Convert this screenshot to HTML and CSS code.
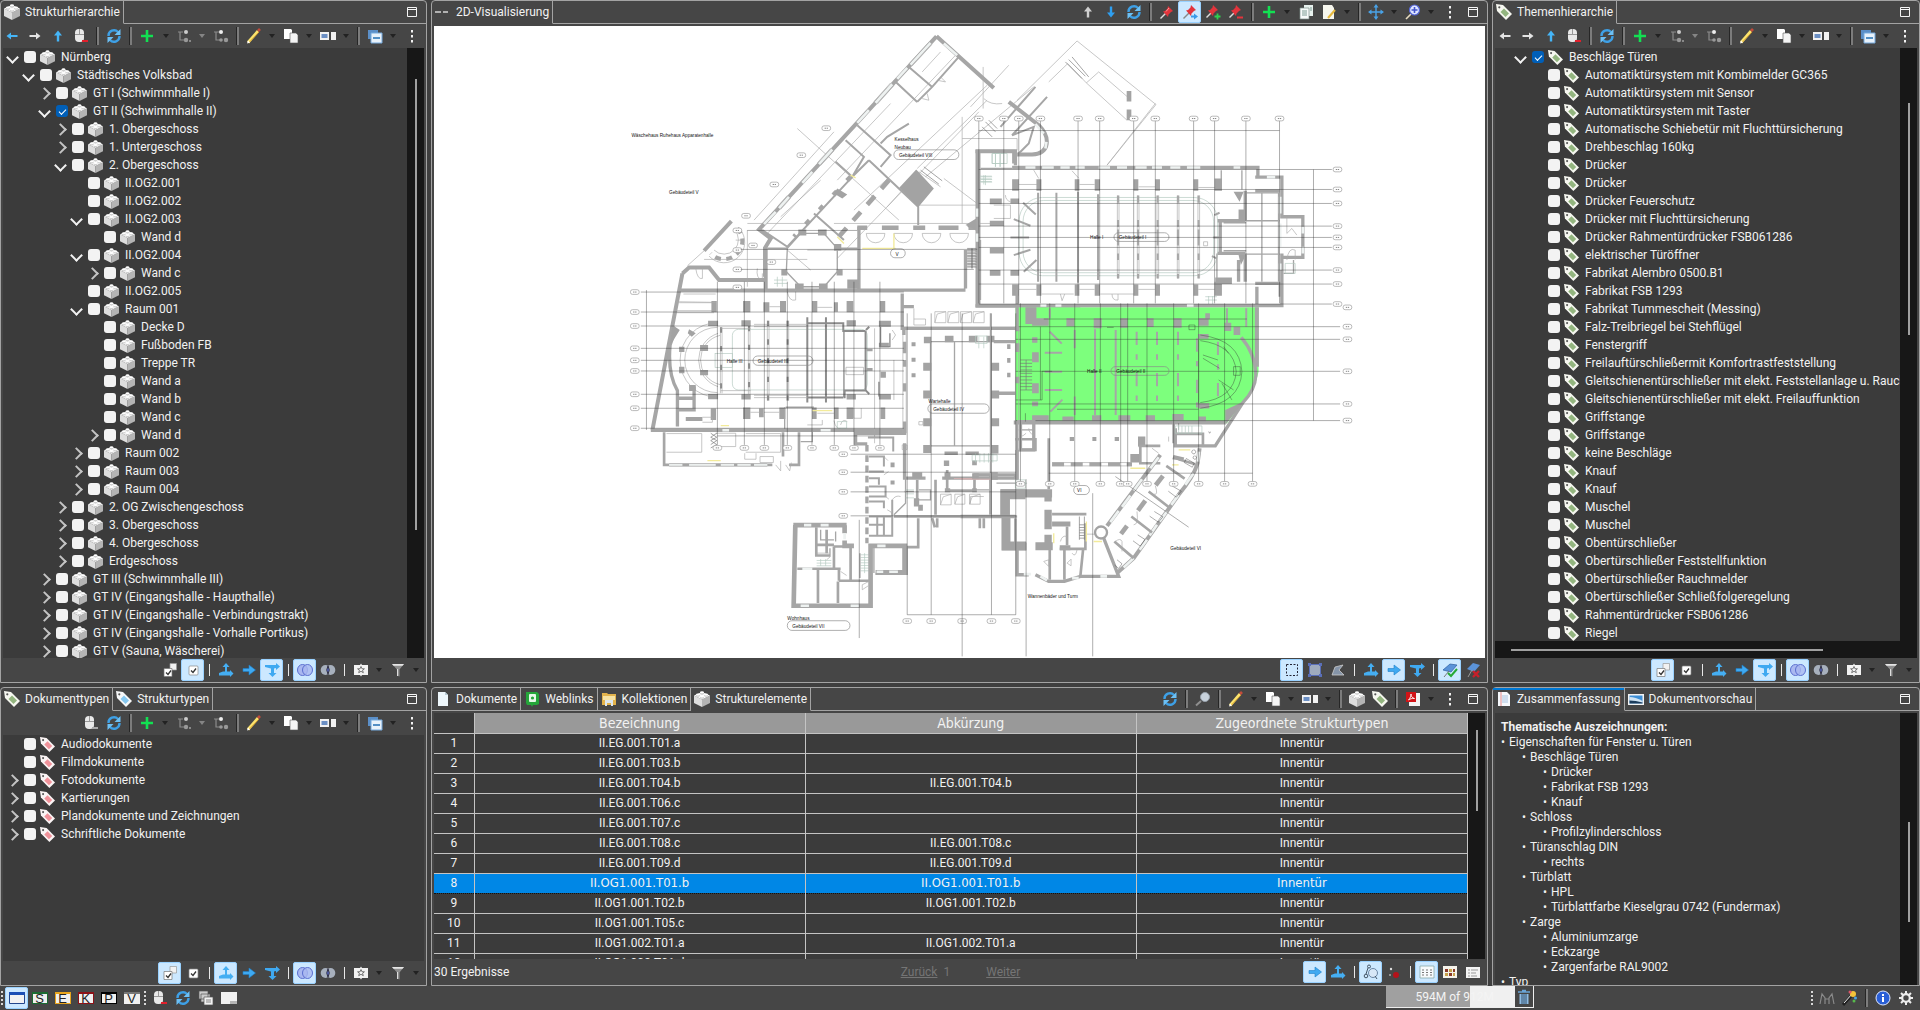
FILE: index.html
```
<!DOCTYPE html>
<html lang="de">
<head>
    <meta charset="UTF-8">
    <meta name="viewport" content="width=device-width, initial-scale=1.0">
    <title>Volksbad Nürnberg</title>
    <link rel="stylesheet" href="styles.css">
</head>
<body>
    <!-- Icon set -->
    <svg class="sprite" aria-hidden="true">
        <symbol id="i-cube" viewBox="0 0 16 16"><path d="M0 4.500l8 4V16l-8-4z" fill="#dedede"/><path d="M16 4.500l-8 4V16l8-4z" fill="#b4b4b4"/><path d="M0 4.500L8 1l8 3.500-8 4z" fill="#fafafa"/><path d="M2 3.500v1.500l2 1 2-1V3.500zM10 3.500v1.500l2 1 2-1V3.500zM6 1v2l2 1 2-1V1zM6 5.500v1.500l2 1 2-1V5.500z" fill="#cfcfcf"/><g fill="#fff"><ellipse cx="4" cy="3.500" rx="2" ry="1"/><ellipse cx="12" cy="3.500" rx="2" ry="1"/><ellipse cx="8" cy="1.200" rx="2" ry="1"/><ellipse cx="8" cy="5.400" rx="2" ry="1"/></g></symbol>
        <symbol id="i-tag-green" viewBox="0 0 16 16"><path d="M0 0l7 1 9 9-6 6-9-9z" fill="#f6f7f0"/><circle cx="3.300" cy="3.300" r="1.100" fill="#555"/><path d="M8 4.500l5 5-3.500 3.500-5-5z" fill="#93b57f"/></symbol>
        <symbol id="i-tag-blue" viewBox="0 0 16 16"><path d="M0 0l7 1 9 9-6 6-9-9z" fill="#f6f7f8"/><circle cx="3.300" cy="3.300" r="1.100" fill="#555"/><path d="M8 4.500l5 5-3.500 3.500-5-5z" fill="#86c8f0"/></symbol>
        <symbol id="i-tag-red" viewBox="0 0 16 16"><path d="M0 0l7 1 9 9-6 6-9-9z" fill="#faf4f4"/><circle cx="3.300" cy="3.300" r="1.100" fill="#555"/><path d="M8 4.500l5 5-3.500 3.500-5-5z" fill="#f0929a"/></symbol>
        <symbol id="i-back" viewBox="0 0 16 16"><path d="M2.500 8L7 4.500V7h6.500v2H7v2.500z" fill="#45b5f7"/></symbol>
        <symbol id="i-back-off" viewBox="0 0 16 16"><path d="M2.500 8L7 4.500V7h6.500v2H7v2.500z" fill="#e4e4e4"/></symbol>
        <symbol id="i-fwd" viewBox="0 0 16 16"><path d="M13.500 8L9 4.500V7H2.500v2H9v2.500z" fill="#e4e4e4"/></symbol>
        <symbol id="i-up" viewBox="0 0 16 16"><path d="M8 2.500L4 7.500h2.800v6h2.400v-6H12z" fill="#45b5f7"/></symbol>
        <symbol id="i-up-off" viewBox="0 0 16 16"><path d="M8 2.500L4 7.500h2.800v6h2.400v-6H12z" fill="#d0d0d0"/></symbol>
        <symbol id="i-down" viewBox="0 0 16 16"><path d="M8 13.500l4-5H9.200v-6H6.800v6H4z" fill="#2f9ff0"/></symbol>
        <symbol id="i-mouse" viewBox="0 0 16 16"><rect x="2" y="1" width="9" height="13" rx="4" fill="#e9e9e9"/><path d="M6.500 1v5M2 6.500h9" stroke="#999" fill="none"/><path d="M9 12h6v2H9z" fill="#e0202c"/></symbol>
        <symbol id="i-mouse-off" viewBox="0 0 16 16"><rect x="2" y="1" width="9" height="13" rx="4" fill="#e9e9e9"/><path d="M6.500 1v5M2 6.500h9" stroke="#999" fill="none"/><path d="M9 12h6v2H9z" fill="#aaa"/></symbol>
        <symbol id="i-refresh" viewBox="0 0 16 16"><path d="M2.500 8A5.500 5.500 0 0 1 12 4M13.500 8A5.500 5.500 0 0 1 4 12" stroke="#3ea0e6" stroke-width="2.400" fill="none"/><path d="M14.500 1v6H8.500zM1.500 15V9h6z" fill="#6cc0f5"/></symbol>
        <symbol id="i-plus" viewBox="0 0 16 16"><path d="M8 2v12M2 8h12" stroke="#12e052" stroke-width="2.600"/></symbol>
        <symbol id="i-node" viewBox="0 0 16 16"><path d="M2 4h5M4 4v8h4" stroke="#8c8c8c" stroke-width="1.200" fill="none"/><circle cx="10" cy="4" r="2" fill="#ccc"/><circle cx="10" cy="12" r="2.200" fill="#999"/><path d="M13 12h2v2h-2z" fill="#888"/></symbol>
        <symbol id="i-child" viewBox="0 0 16 16"><path d="M1 4h5M3 4v8h4" stroke="#8c8c8c" stroke-width="1.200" fill="none"/><circle cx="8" cy="4" r="2" fill="#eee"/><circle cx="8" cy="12" r="1.800" fill="#999"/><circle cx="13" cy="12" r="2.200" fill="#999"/></symbol>
        <symbol id="i-pencil" viewBox="0 0 16 16"><path d="M2 14.500L12 3" stroke="#fbe36d" stroke-width="2.800"/><path d="M3 14.500L13 4" stroke="#d79b22" stroke-width=".8"/><path d="M12 3l2-2" stroke="#c34b3b" stroke-width="2.600"/><path d="M1 15.500l1-3 2 2z" fill="#fff"/></symbol>
        <symbol id="i-copy" viewBox="0 0 16 16"><path d="M1 1h7l1 1v9H1z" fill="#fff"/><path d="M7 5h6l2 2v8H7z" fill="#f4f4f4" stroke="#555" stroke-width=".6"/></symbol>
        <symbol id="i-rename" viewBox="0 0 16 16"><path d="M0 4h9v8H0z" fill="#f2f2f2"/><path d="M1.500 6h6v4h-6z" fill="#6b8fc4"/><path d="M11 4h5v8h-5z" fill="#f2f2f2"/></symbol>
        <symbol id="i-collapse" viewBox="0 0 16 16"><path d="M1 2h10v9H1z" fill="#5b8fc8"/><path d="M4 5h11v10H4z" fill="#e8f2fb" stroke="#74a9dd"/><path d="M6 10h7" stroke="#2d76b8" stroke-width="1.600"/></symbol>
        <symbol id="i-more" viewBox="0 0 16 16"><path d="M7 2h2v2.500H7zM7 7h2v2.500H7zM7 12h2v2.500H7z" fill="#f2f2f2"/></symbol>
        <symbol id="i-max" viewBox="0 0 16 16"><path d="M3.500 3.500h9v9h-9zM3.500 5.500h9" stroke="#f5f5f5" fill="none"/></symbol>
        <symbol id="i-pin" viewBox="0 0 16 16"><path d="M1.500 14.500L7 9" stroke="#ddd" stroke-width="1.400"/><path d="M9 2l5 5-2 1-2.500 2.500L9 13 4 7.500 6 7l2.500-2.500z" fill="#e3343c"/><path d="M10 4L7 7.500" stroke="#ff9a9a"/></symbol>
        <symbol id="i-pin-go" viewBox="0 0 16 16"><path d="M1.500 14.500L7 9" stroke="#888" stroke-width="1.400"/><path d="M9 1l5 5-2 1-2.500 2.500L9 12 4 6.500 6 6l2.500-2.500z" fill="#e3343c"/><path d="M9 11.500h3V9.500l4 3-4 3v-2H9z" fill="#3a9ae8"/></symbol>
        <symbol id="i-pin-add" viewBox="0 0 16 16"><path d="M1.500 13.500L6 9" stroke="#ddd" stroke-width="1.400"/><path d="M8 1l5 5-2 1-2.500 2.500L8 12 3 6.500 5 6l2.500-2.500z" fill="#e3343c"/><path d="M12.500 9.500v6M9.500 12.500h6" stroke="#2fd04e" stroke-width="1.800"/></symbol>
        <symbol id="i-pin-del" viewBox="0 0 16 16"><path d="M1.500 13.500L6 9" stroke="#ddd" stroke-width="1.400"/><path d="M8 1l5 5-2 1-2.500 2.500L8 12 3 6.500 5 6l2.500-2.500z" fill="#e3343c"/><path d="M9 13.500h6" stroke="#e3343c" stroke-width="2"/></symbol>
        <symbol id="i-docs" viewBox="0 0 16 16"><path d="M6 1h9v11H6z" fill="#e8f1ee"/><path d="M2 4h9v11H2z" fill="#f7fbfa" stroke="#7c8f8a" stroke-width=".7"/><path d="M4 7h5M4 9h5M4 11h5M12 4h2M12 6h2" stroke="#7c9c94"/></symbol>
        <symbol id="i-note" viewBox="0 0 16 16"><path d="M2 1h9l2 3v11H2z" fill="#f6f6ee"/><path d="M7 14l7-8" stroke="#e6b93e" stroke-width="2"/></symbol>
        <symbol id="i-move" viewBox="0 0 16 16"><path d="M8 2v12M2 8h12" stroke="#49a3e8" stroke-width="1.400"/><path d="M8 0L5.500 3.500h5zM8 16l-2.500-3.500h5zM0 8l3.500-2.500v5zM16 8l-3.500-2.500v5z" fill="#49a3e8"/></symbol>
        <symbol id="i-zoomfit" viewBox="0 0 16 16"><path d="M1 15l5-5" stroke="#e8dcc0" stroke-width="1.600"/><circle cx="9.500" cy="6" r="5" fill="#dfe6ff" stroke="#5566d8" stroke-width="1.200"/><path d="M9.500 3v6M6.500 6h6" stroke="#4455cc" stroke-width="1.600"/></symbol>
        <symbol id="i-magnify" viewBox="0 0 16 16"><path d="M1 14.500L6 10" stroke="#8f8f8f" stroke-width="2"/><circle cx="10" cy="6" r="4.500" fill="#c8d2dc" stroke="#98a2ac"/></symbol>
        <symbol id="i-pdf" viewBox="0 0 16 16"><path d="M4 2h11v13H4z" fill="#f3f3f3"/><path d="M1 1h10v10H1z" fill="#d21317"/><path d="M3.500 9C5.500 7 6 4.500 6 3c0 2 1 4 3.500 4.500C7 7 5 8 3.500 9z" stroke="#fff" fill="none" stroke-width=".9"/></symbol>
        <symbol id="i-allcheck" viewBox="0 0 16 16"><path d="M8 1.500h6.500v6.500H8z" fill="#f2f2f2" stroke="#999" stroke-width=".7"/><path d="M2 6.500h8v8H2z" fill="#fff" stroke="#777" stroke-width=".7"/><path d="M4 10.500l2 2 3-4" stroke="#333" fill="none" stroke-width="1.300"/></symbol>
        <symbol id="i-check" viewBox="0 0 16 16"><rect x="4" y="4" width="9" height="9" rx="1" fill="#fff" stroke="#888" stroke-width=".7"/><path d="M6 8.500l2 2 3-4" stroke="#333" fill="none" stroke-width="1.300"/></symbol>
        <symbol id="i-inherit" viewBox="0 0 16 16"><path d="M8 1l3.500 4H9v4.500h3V8l3.500 3.500L12 15v-1.500H1V11l4-1.500h2V5H4.500z" fill="#45aef2"/></symbol>
        <symbol id="i-go" viewBox="0 0 16 16"><path d="M2 6.500h6V3l6.500 5L8 13V9.500H2z" fill="#3fa9f1" stroke="#1d7fc9" stroke-width=".6"/></symbol>
        <symbol id="i-tdown" viewBox="0 0 16 16"><path d="M1 3h11V1l4 3.500L12 8V6L10 6.500V11h2.500L8.500 15 4.500 11H7V6.500L1 5z" fill="#3fa9f1"/></symbol>
        <symbol id="i-union" viewBox="0 0 16 16"><ellipse cx="5.500" cy="8" rx="5" ry="5.500" fill="#a9b8f0" stroke="#5b6fd0"/><ellipse cx="10.500" cy="8" rx="5" ry="5.500" fill="#a9b8f0" fill-opacity=".8" stroke="#5b6fd0"/></symbol>
        <symbol id="i-intersect" viewBox="0 0 16 16"><ellipse cx="5.500" cy="8" rx="4.800" ry="5" fill="#a7b0bd"/><ellipse cx="10.500" cy="8" rx="4.800" ry="5" fill="#a7b0bd"/><path d="M8 3.700q2.500 4.300 0 8.600-2.500-4.300 0-8.600z" fill="#5c70d8" stroke="#334"/></symbol>
        <symbol id="i-star" viewBox="0 0 16 16"><path d="M1 3h6l1-1.500L9 3h6v10H9l-1 1.500L7 13H1z" fill="#f3f3f3"/><path d="M8 4.500l1 2.300h2.400L9.600 8.300l.7 2.400L8 9.300l-2.300 1.400.7-2.400-1.800-1.500H7z" fill="none" stroke="#555" stroke-width=".8"/></symbol>
        <symbol id="i-filter" viewBox="0 0 16 16"><path d="M2 2h12L9.500 7.500v7l-2.500-1v-6z" fill="#8e8e8e"/><path d="M2 2h12l-1.500 1.800h-9z" fill="#e6e6e6"/><path d="M7.500 7v7" stroke="#ddd"/></symbol>
        <symbol id="i-select" viewBox="0 0 16 16"><path d="M2.500 2.500h11v11h-11z" fill="none" stroke="#223" stroke-dasharray="2 1.500"/></symbol>
        <symbol id="i-rect" viewBox="0 0 16 16"><path d="M2.500 2.500h11v11h-11z" fill="#9fabbd" stroke="#5a6fb8"/><path d="M1 1h3v3H1zM12 1h3v3h-3zM1 12h3v3H1zM12 12h3v3h-3z" fill="#5a6fb8"/></symbol>
        <symbol id="i-poly" viewBox="0 0 16 16"><path d="M2 13l3-8 8-2-4 5 5 5z" fill="#8594a8" stroke="#ccc" stroke-width=".8"/></symbol>
        <symbol id="i-layer-ok" viewBox="0 0 16 16"><path d="M1 8l7-6 7 1-6 7z" fill="#5b93d8" stroke="#2b5da0" stroke-width=".7"/><path d="M2 15l5-6" stroke="#777"/><path d="M6 11l3 3 6-7" stroke="#27a935" stroke-width="2" fill="none"/></symbol>
        <symbol id="i-layer-del" viewBox="0 0 16 16"><path d="M2 7l6-6 7 2-6 7z" fill="#5b93d8"/><path d="M3 15l4-7" stroke="#999"/><path d="M8 9l6 6M14 9l-6 6" stroke="#c8202a" stroke-width="2.400"/></symbol>
        <symbol id="i-links" viewBox="0 0 16 16"><circle cx="10" cy="9" r="4.500" fill="#d7e7f7" stroke="#6a86a5"/><circle cx="6" cy="2.500" r="1.500" fill="none" stroke="#456"/><circle cx="3" cy="12" r="1.800" fill="none" stroke="#456"/><path d="M5 4L3 10M12 12l2 3" stroke="#456"/></symbol>
        <symbol id="i-unlink" viewBox="0 0 16 16"><circle cx="5" cy="5" r="1.200" fill="#ddd"/><circle cx="4" cy="11" r="1" fill="#aaa"/><circle cx="10" cy="11" r="3" fill="#b3121a"/></symbol>
        <symbol id="i-table" viewBox="0 0 16 16"><path d="M1 2h14v12H1z" fill="#f7fafc" stroke="#8aa" stroke-width=".8"/><path d="M3 6h2M7 6h2M11 6h2M3 8.500h2M7 8.500h2M11 8.500h2M3 11h2M7 11h2M11 11h2" stroke="#777"/></symbol>
        <symbol id="i-thumbs" viewBox="0 0 16 16"><path d="M1 2h14v12H1z" fill="#f5f3ea"/><path d="M3 5h3v3H3zM11 5h2v3h-2zM7 9h3v3H7z" fill="#8b3a2a"/><path d="M7 5h3v3H7zM3 9h3v3H3zM11 9h2v3h-2z" fill="#c8a24a"/></symbol>
        <symbol id="i-list" viewBox="0 0 16 16"><path d="M1 3h14v11H1z" fill="#f4f4f4"/><path d="M3 6h2M6 6h7M3 9h2M6 9h5M3 12h2M6 12h6" stroke="#999"/></symbol>
        <symbol id="i-page" viewBox="0 0 16 16"><path d="M3 1h7l3 3v11H3z" fill="#eef7fc"/><path d="M10 1v3h3z" fill="#b9cdd8"/></symbol>
        <symbol id="i-weblink" viewBox="0 0 16 16"><path d="M2 1h11l2 2v10l-2 1H9l-1 2-1-2H3l-1-2z" fill="#25a53a"/><rect x="5" y="3" width="7" height="8" rx="1" fill="#e8f8ea"/><circle cx="8.500" cy="7" r="1.600" fill="#25a53a"/></symbol>
        <symbol id="i-folder" viewBox="0 0 16 16"><path d="M1 2h5l1 1h8v11H1z" fill="#e3b34c"/><path d="M2 5h12v4H2z" fill="#f7e3a4"/><path d="M4 9h8v6h-2v-3H6v3H4z" fill="#dce6ee"/></symbol>
        <symbol id="i-plan" viewBox="0 0 16 16"><path d="M0 8h6M8 8h5" stroke="#d5d5d5" stroke-width="1.400"/></symbol>
        <symbol id="i-summary" viewBox="0 0 16 16"><path d="M2 1h9l3 3v11H2z" fill="#f5f8fc"/><path d="M5 1v14" stroke="#e58a8a"/><path d="M6 5h6M6 7h6M6 9h6M6 11h6" stroke="#a9c3e0"/></symbol>
        <symbol id="i-preview" viewBox="0 0 16 16"><path d="M0 3h16v11H0z" fill="#f3f3f3"/><path d="M1.500 4.500h13v8h-13z" fill="#3e8fd6"/><path d="M1.500 6q6 0 13 4v2.500h-13z" fill="#cfe3f3"/><path d="M1.500 9.500q6 0 13 2v1h-13z" fill="#1b3c5c"/></symbol>
        <symbol id="i-window" viewBox="0 0 16 16"><path d="M.5 2.500h15v11H.5z" fill="#f2f2f2" stroke="#24468c"/><path d="M0 2h16v3H0z" fill="#1c4fb5"/></symbol>
        <symbol id="i-cascade" viewBox="0 0 16 16"><path d="M1 1h9v8H1zM3 4h9v8H3z" fill="#ccc" stroke="#555" stroke-width=".7"/><path d="M6 7h9v8H6z" fill="#f2f2f2" stroke="#555" stroke-width=".7"/><path d="M8 10h5M8 12h5" stroke="#888"/></symbol>
        <symbol id="i-blank" viewBox="0 0 16 16"><path d="M0 2h16v12H0z" fill="#f1f1f1"/><path d="M9 11h7v3H9z" fill="#b5b5b5"/></symbol>
        <symbol id="i-trash" viewBox="0 0 16 16"><path d="M2 3h12M6 1.500h4" stroke="#6aa5d8" stroke-width="1.600"/><path d="M3.500 5h9v10h-9z" fill="#8fbce4"/><path d="M6 5v10M8 5v10M10 5v10" stroke="#33506c"/></symbol>
        <symbol id="i-binoc" viewBox="0 0 16 16"><path d="M1 14l2-10 3 4v6M15 14L13 4l-3 4v6M6 9h4" stroke="#8a8a8a" stroke-width="1.200" fill="none"/></symbol>
        <symbol id="i-wand" viewBox="0 0 16 16"><path d="M1 15L11 4" stroke="#222" stroke-width="3"/><path d="M2 13l8-9" stroke="#eee"/><circle cx="11" cy="4" r="3" fill="#f3c33a"/><circle cx="13.500" cy="8" r="1.500" fill="#4aa3e8"/><circle cx="8" cy="2" r="1.500" fill="#e0556a"/><circle cx="12" cy="11" r="1.500" fill="#57b94c"/></symbol>
        <symbol id="i-info" viewBox="0 0 16 16"><circle cx="8" cy="8" r="7" fill="#2a5fd6" stroke="#dfe8ff"/><path d="M7 7h2v5H7zM7 4h2v2H7z" fill="#fff"/></symbol>
        <symbol id="i-gear" viewBox="0 0 16 16"><circle cx="8" cy="8" r="3.800" fill="none" stroke="#ececec" stroke-width="2.200"/><path d="M8 1v3M8 12v3M1 8h3M12 8h3M3 3l2 2M11 11l2 2M3 13l2-2M11 5l2-2" stroke="#ececec" stroke-width="2"/></symbol>
    </svg>

    <main class="workbench">
        <!-- Structure tree -->
        <section class="panel">
            <header class="tabs">
                <button class="tab active"><svg class="icon"><use href="#i-cube"/></svg>Strukturhierarchie</button>
                <div class="toolbar tabs-fill" data-tools="max"></div>
            </header>
            <div class="toolbar" data-tools="back fwd up mouse | refresh | plus v node w child | pencil v copy v rename v | collapse v more"></div>
            <div class="view">
                <ul class="tree" id="structureTree"></ul>
                <div class="scroll scroll-structure"><i></i></div>
            </div>
            <footer class="toolbar bottom" data-tools="allcheck check* | inherit go tdown* | union* intersect | star v filter v"></footer>
        </section>

        <!-- Floor plan -->
        <section class="panel">
            <header class="tabs">
                <button class="tab active"><svg class="icon"><use href="#i-plan"/></svg>2D-Visualisierung</button>
                <div class="toolbar tabs-fill" data-tools="up-off down refresh | pin pin-go* pin-add pin-del | plus v docs note v | move v zoomfit v more max"></div>
            </header>
            <div class="canvas">
                <svg class="plan" viewBox="1299 78 3156 1896" role="img" aria-label="Grundriss Volksbad">
                    <!-- Gebäudeteil V und VIII -->
                    <g transform="translate(1860 60)">
                        <path class="fine" d="M1190 240L1370 62 1607 253 1460 435M1342 130L1398 188 1520 300M1342 130L1285 185M1435 155L1525 233M1398 188L1435 155M915 470L1240 200M1025 610V290M1025 355H1190V390M1088 265V140M1165 135L1050 260M835 600L530 325M640 335L400 600M810 250L440 640M700 570L1100 195M650 715L1075 275M970 475L1070 550M890 555H1070M895 455L960 500M560 690H710M380 610H560M250 718H560M345 660H370M380 630V800M640 610H1135M500 690L570 750M890 445L1100 240M1005 105L650 480M960 95L905 155M895 455L800 560M600 480L480 590"/>
                        <path class="stairs" d="M1335 125l50 50M1345 118l50 50M1355 110l50 60M900 450l55 42M910 440l55 42M1085 320l30 30M1095 305l30 30M1105 300l25 25"/>
                        <path class="wall w12" d="M948 48L1120 203M948 48L415 628 450 655 435 680V810M1165 245L1255 315C1290 350 1290 400 1235 403H1190"/>
                        <path class="glass" d="M930 68L870 133M860 143L830 176M815 192L765 248M745 270L710 308M635 388L595 432M575 455L545 488M505 530L475 564M465 575L430 612M970 70L1010 105M1245 312L1270 340M1278 365L1275 385"/>
                        <path class="fine" d="M925 66L865 131M934 73L874 138M810 188L760 244M820 196L770 252M630 384L590 428M640 392L600 436M500 526L470 560M510 534L480 568"/>
                        <path class="wall w6" d="M1015 110L935 200 890 245M865 310L800 350 780 370M865 140L935 200M820 180L890 245M710 315L810 405 780 440M675 360L730 410 695 470M645 425L695 470 500 680 425 630M745 420L893 560V615M745 420L695 470M1245 200L1140 320M1280 230L1175 345L1240 320 1225 370 1195 400M580 580L670 660M650 685H715M440 685H500M430 770V680"/>
                        <path class="wall w14" stroke-dasharray="34 30" d="M805 480L650 655"/>
                        <path class="wall w14" stroke-dasharray="16 44" d="M690 470L520 650"/>
                        <path class="block" d="M887 448l53 57-47 56-57-58zM1040 620l35-30v45zM650 505l30 18-15 12-25-15zM1519 212h14v32h-14zM1519 268h14v32h-14z"/>
                        <path class="wall w14" stroke-dasharray="30 44 50 44 36 40 60" d="M710 623H1078"/>
                        <path class="wall w10" d="M715 620V805M1035 690V805M175 810H1035M1075 390V860M1065 394H1180V430M1065 858H1380M845 820V925H1190M845 860H880"/>
                        <path class="wall w12" d="M332 603L250 692M185 760L205 742H265L295 780H430M185 760L95 1230"/>
                        <path class="wall w12" stroke-dasharray="18 16" d="M350 625A50 50 0 0 1 270 700"/>
                        <path class="fine" d="M356 625A56 56 0 0 1 265 708M340 628A42 42 0 0 1 280 690M200 737L250 692M188 822H285M175 848H285M165 878H280M737 640a28 28 0 0 0 56 0zM820 640a28 28 0 0 0 56 0zM905 640a28 28 0 0 0 56 0zM988 640a28 28 0 0 0 56 0zM225 745q5 35 20 30v-30M410 745q-5 30 15 35v-20M950 180l25 5-15-15M905 235l20 5-5-20M1090 235q20 20 55 15M500 815q5 30 25 25v-30M880 865v50h35v-18h-35"/>
                        <path class="wall w4" d="M500 685L540 640H610L650 685V755L610 800H540L497 755z"/>
                        <path class="block" d="M533 628h24v18h-24zM592 628h26v18h-26zM640 672h22v20h-22zM482 748h18v18h-18zM648 748h18v18h-18zM523 790h26v18h-26zM595 790h26v18h-26zM680 778h35v28h-35z"/>
                        <path class="yellow" d="M820 640V685H725M650 650l20 20M690 465l15 8M730 685H825"/>
                        <path class="stairs" d="M1040 690h30M1040 698h30M1040 706h30M1040 714h30M1040 722h30M1040 730h30M1040 738h30M1055 685v60"/>
                        <path class="teal" d="M460 780h40M460 790h40M470 770v30M485 770v30M1115 400h45v30h-45zM1125 400v40M1140 400v40M1080 470h35M1080 478h35M1080 486h35M1095 465v30"/>
                        <path class="fine" d="M943 875h33v33h-33zM982 875h33v33h-33zM1020 875h33v33h-33zM1058 875h33v33h-33zM943 908l7-26 26-7M982 908l7-26 26-7M1020 908l7-26 26-7M1058 908l7-26 26-7"/>
                        <rect class="pill" x="820" y="389" width="195" height="29" rx="14"/>
                        <rect class="pill" x="810" y="686" width="44" height="27" rx="13"/>
                        <g class="caption"><text x="32" y="350">Wäschehaus Ruhehaus Apparatenhalle</text><text x="145" y="522">Gebäudeteil V</text><text x="822" y="361">Kesselhaus</text><text x="822" y="387">Neubau</text><text x="835" y="412">Gebäudeteil VIII</text><text x="825" y="707">V</text></g>
                    </g>

                    <!-- Gebäudeteil II -->
                    <g transform="translate(2880 300)">
                        <path class="marked" d="M165 622H895V815Q885 870 850 905L800 970H165z"/>
                        <path class="wall w12" d="M160 968H795M890 622V800"/>
                        <path class="wall w10" d="M843 712Q885 760 887 825 885 870 848 908L765 1038H645V985"/>
                        <path class="block" d="M195 622h33v50h-33zM215 655h50v22h-50zM318 655h24v24h-24zM400 655h24v30h-24zM480 655h22v28h-22zM560 655h20v26h-20zM640 655h24v28h-24zM715 655h30v22h-30zM735 640h14v18h-14zM793 668h20v25h-20zM820 680h20v25h-20zM713 702h32v14h-32zM713 910h34v16h-34zM215 712h16v16h-16zM215 757h20v30h-20zM215 850h20v30h-20zM215 905h18v14h-18zM215 946h50v18h-50zM306 950h34v14h-34zM395 946h28v18h-28zM474 946h36v18h-36zM556 946h28v18h-28zM636 942h34v20h-34zM715 950h22v16h-22zM165 680h12v14h-12zM165 730h12v26h-12zM165 830h12v20h-12zM795 930l55-25-55 70z"/>
                        <path class="wall w6" d="M404 688V945M466 690V945M268 695l36 36M253 758h52M253 815h52M253 870h52M270 935l36-36M343 690v55M343 890v55M858 625V680M800 625v45M268 625v30"/>
                        <path class="wall w6" stroke-dasharray="40 28 16 40" d="M529 695V935M590 695V935M653 695V935M710 715V945M773 725V905"/>
                        <path class="ink" d="M165 680H1140M165 718H1140M165 814H1140M165 912H1140M165 962H1140M250 657H860M715 720V910M240 680V900M245 814v86h-80M245 814h30M290 928H715M440 682h20M686 675h18v14h-18zM728 775l50 30M728 765l45 15M775 840l45 30M790 740l15 20M785 850l30 50M820 800h20v26h-20z"/>
                        <path class="ink" d="M720 705Q840 720 845 815 840 910 720 925M720 722Q822 735 828 815 822 895 720 908"/>
                        <path class="stairs" d="M180 780h35M180 790h35M180 800h35M180 810h35M180 820h35M180 830h35M180 840h35M180 850h35M180 860h35M180 870h35M197 780v90"/>
                        <rect class="pill" x="452" y="800" width="174" height="26" rx="13"/>
                        <g class="caption"><text x="380" y="820">Halle II</text><text x="468" y="820">Gebäudeteil II</text></g>
                    </g>

                    <!-- Gebäudeteil I -->
                    <g transform="translate(2880 300)">
                        <rect class="teal" x="176" y="292" width="596" height="235" rx="70"/>
                        <rect class="teal" x="188" y="301" width="572" height="217" rx="62"/>
                        <path class="wall w10" d="M50 150V617H965V550M45 152H165V195M885 231H965V350H1028V472H965M965 460V555M155 202H898M893 197V232M885 272H958M885 550H960V590M890 612V560M772 362H855M772 460H855M780 360V460M770 545H810M835 545V480M855 272V362M855 460V545"/>
                        <path class="wall w4" d="M60 205H155M783 210V270M845 210V268M858 278H955V545M790 368H858M790 452H858M858 362H958M858 462H958M905 278V545M60 420V600M770 540V460M1000 480V520H970"/>
                        <path class="glass" d="M195 202h30M245 202h35M300 202h28M345 202h28M415 202h34M470 202h30M525 202h34M575 202h30M630 202h30M680 202h40M820 202h20M50 325v25M50 400v25M960 290v50M960 370v70M960 490v20M680 616h20M285 616h18M240 616h18M1028 380v20M1028 440v20M920 231h25"/>
                        <path class="block" d="M155 237h20v35h-20zM228 237h15v35h-15zM343 237h14v35h-14zM403 237h16v35h-16zM520 237h14v35h-14zM585 237h14v35h-14zM700 237h14v35h-14zM763 235h22v37h-22zM155 553h20v34h-20zM228 553h15v34h-15zM343 553h14v34h-14zM403 553h16v34h-16zM520 553h14v34h-14zM585 553h14v34h-14zM700 553h14v34h-14zM763 545h22v42h-22zM88 295h36v17h-36zM150 295h26v15h-26zM88 362h42v16h-42zM88 443h42v17h-42zM88 510h32v17h-32zM150 510h26v17h-26zM820 275h30l-12 30zM835 328h22v34h-22zM835 465h22l-15 30zM765 532h50v20h-50zM15 375l32-20v35z"/>
                        <path class="wall w6" d="M233 278V545M288 278V545M353 275V548M413 282V540M188 308l38 35M160 357l50 20M150 412h56M160 465l50-16M190 515l38-35M762 345l16-7M758 412h24M755 468l14 7"/>
                        <path class="wall w6" stroke-dasharray="22 52 20 8 48 24 20 42" d="M473 286V535M533 286V535M592 286V535M653 286V535M715 286V535"/>
                        <path class="fine" d="M471 286V535M476 286V535M531 286V535M536 286V535M590 286V535M595 286V535M651 286V535M656 286V535M713 286V535M718 286V535M175 253h55M357 253h46M535 260h50M714 262h50M175 568h53M357 568h46M534 568h50M714 568h50M243 582H340M420 582H520M300 582l5 20 8-20M455 582q0 20 18 18v-18M100 315h50v40h-50M730 425h12v12h-12zM135 285q0 15 15 20M220 210l15 25M335 212l20 22M980 350v50l15-15 15 20M980 480q5-40 25-30v28M440 195L585 10"/>
                        <path class="stairs" d="M20 445h28M20 453h28M20 461h28M20 469h28M20 477h28M20 485h28M20 493h28M20 501h28M34 445v60"/>
                        <path class="teal" d="M95 160h35v30h-35zM105 160v40M118 160v40M58 228h36M58 236h36M58 244h36M70 225v28M735 590h35M735 600h35M745 588v24M757 588v24M975 490h30v30h-30z"/>
                        <rect class="pill" x="461" y="398" width="165" height="26" rx="13"/>
                        <g class="caption"><text x="389" y="417">Halle I</text><text x="475" y="417">Gebäudeteil I</text></g>
                    </g>

                    <!-- Gebäudeteil III -->
                    <g transform="translate(1860 810)">
                        <rect class="teal" x="335" y="178" width="405" height="182" rx="18"/>
                        <rect class="teal" x="283" y="250" width="52" height="42"/>
                        <path class="wall w10" d="M90 481H850M165 175L148 225Q140 310 170 362V470M165 385H220M165 420H220V350"/>
                        <path class="fine" d="M290 158A112 112 0 0 0 290 382M290 172A98 98 0 0 0 290 368M292 190A84 84 0 0 0 292 350M298 196A76 76 0 0 0 298 344"/>
                        <path class="block" d="M155 165l22 15-28 45zM205 178l20 12-12 10-12-10zM175 230h16v16h-16zM175 290h16v20h-16zM205 345h20v18h-20zM238 225h24v18h-24zM238 300h24v16h-24zM262 152h30v16h-30zM262 372h30v16h-30zM272 93h16v34h-16zM270 416h16v34h-16zM367 93h22v34h-22zM428 97h18v28h-18zM478 93h18v34h-18zM574 93h16v34h-16zM640 97h12v28h-12zM678 93h20v34h-20zM778 93h16v34h-16zM367 413h22v34h-22zM415 416h14v26h-14zM476 413h18v34h-18zM574 413h14v34h-14zM640 413h14v34h-14zM678 413h20v34h-20zM780 413h14v34h-14zM362 151h28v18h-28zM362 373h28v16h-28zM678 151h28v18h-28zM678 373h28v16h-28zM775 152h36v18h-36zM775 218h30v14h-30zM780 305h16v18h-16zM775 373h36v16h-36zM738 236h18v8h-18zM738 294h18v8h-18zM195 441h50v12h-50z"/>
                        <path class="dark w6" d="M560 142V398M616 142V398M560 160H668V183H735M668 383H560M735 183V362H672V385M736 180l10-10M736 362l10 10"/>
                        <path class="fine" d="M400 163H560M400 383H560M400 170H560M400 376H560M299 172V370M304 172V370M383 168V372M388 168V372M440 152V392M445 152V392M499 152V392M504 152V392"/>
                        <path class="dark w6" stroke-dasharray="16 40" d="M301 172V370M385 168V372M442 152V392M501 152V392"/>
                        <path class="dark w4" d="M670 180V382M780 170V230H808V190M775 335V380"/>
                        <path class="fine" d="M300 175H390M300 362H390M446 110h32M590 112h45M389 427h30M430 427h46M590 430h50M676 292h53v22h-53zM700 415v30h22v-30M245 442h30v15h-30M640 452q5 25 20 25M560 465h45v-15M820 270V390M762 175V520M815 180l10 15M825 195l-10 15M165 95l120 2M165 122h110"/>
                        <path class="wall w8" d="M130 487V585H455M505 585H535V487M487 487V560"/>
                        <path class="fine" d="M137 491H243V547H137M375 491H480V547H375M285 490h60v40h-60M372 550v18h34v-18M418 560h40v18h-40z"/>
                        <path class="wall w4" d="M540 515H575V485M492 412V478M495 412H580"/>
                        <path class="glass" d="M145 585h40M205 585h40M225 585h60M300 585h40M350 585h40M400 585h40M305 481h20M600 481h30"/>
                        <path class="fine" d="M145 581H440M145 589H440M465 585l15 18v-30M495 585l12 18 5-25"/>
                        <path class="stairs" d="M270 490l18 12-18 10 18 12-18 10M288 490l-18 12 18 10-18 12"/>
                        <path class="yellow" d="M260 572h40M300 467h25M575 422h60"/>
                        <rect class="pill" x="397" y="258" width="180" height="28" rx="14"/>
                        <g class="caption"><text x="318" y="278">Halle III</text><text x="411" y="278">Gebäudeteil III</text></g>
                    </g>

                    <!-- Gebäudeteil IV -->
                    <g transform="translate(1860 810)">
                        <path class="wall w10" d="M850 180V195M852 215V250M852 270V290M852 340V365M852 455V490H705V522H740M852 520V625H915M965 625H1190V540M1120 215H1185M1120 370H1185M1190 60V180M1190 455H1240V540H1200V460M845 175H1190"/>
                        <path class="fine" d="M847 180V490M857 180V490M1185 180V455M1195 180V455"/>
                        <path class="wall w8" d="M820 740H1190M893 745V832H858V912H765M890 630V700M945 630V735M980 600V662H1062V615H1110V735M1185 745V840M935 745l8 28M950 745v28M1078 745V775M1090 745V775"/>
                        <path class="wall w4" d="M930 215H1112V528H930zM1002 215V528M1110 130V640M1128 640H1185M1066 660H1110M855 625V700L820 735M760 910V830M1195 480H1240M852 665H880M895 660h35v30h-35"/>
                        <path class="block" d="M910 200h22v20h-22zM973 197h26v20h-26zM1045 197h26v20h-26zM1098 197h24v20h-24zM908 278h24v24h-24zM908 362h24v24h-24zM908 445h24v24h-24zM908 525h24v24h-24zM1112 278h24v24h-24zM1112 362h24v24h-24zM1112 445h24v24h-24zM1112 525h22v26h-22zM873 217h12v12h-12zM873 263h12v12h-12zM873 310h12v12h-12zM1160 223h10v14h-10zM1160 264h10v14h-10zM1160 308h10v14h-10zM970 572h16v16h-16zM1055 572h14v14h-14zM810 578h12v14h-12zM810 632h12v12h-12zM972 608h18v20h-18zM1055 610h20v18h-20zM875 608h30v18h-30zM1112 608h20v22h-20zM973 655h16v12h-16zM1055 655h14v12h-14zM972 545h40v10h-40zM1035 545h40v10h-40zM880 685h16v25h-16zM893 705h14v18h-14z"/>
                        <path class="block" d="M1140 658h75v30h-75zM1140 688h28v55h-28zM1145 743h25v98h-25zM1145 815h72v26h-72z"/>
                        <path class="wall w10" stroke-dasharray="20 11" d="M739 525V820"/>
                        <path class="wall w6" d="M742 503H818V545M745 798H815V690M745 560H790V590M745 605H790M745 625H775V645M745 650H795V680H745M745 695H790V715M745 740H770V795M790 740V795M745 765H790M745 740H815"/>
                        <path class="fine" d="M960 673h32v32h-32zM1003 673h30v30h-30zM1047 673h32v30h-32zM960 705l8-24 24-8M1003 703l8-22 22-8M1047 703l8-22 24-8M790 560l12 12M790 615l14-10M795 680l10 8M815 690q10-15 25-10M800 720q15 5 15 15M660 465q5-20 20-10M895 455h12v10h-12zM845 525h14v14h-14z"/>
                        <path class="teal" d="M1055 555h75v18h-75zM1065 550v28M1078 550v28M1091 550v28M1104 550v28M1117 550v28M1065 198h35v22h-35zM1075 200v35M1090 200v35M650 455h28v20h-28zM855 660h25M855 672h25M855 684h25M720 855h25M720 863h25M720 871h25M720 879h25M720 887h25M720 895h25M720 903h25M732 850v60M588 872h44M588 880h44M588 888h44M600 868v20M615 868v20M1195 640h25M1185 630h30v25h-30z"/>
                        <path class="pinkline" d="M1000 626H1055M1020 628H1110"/>
                        <rect class="pill" x="922" y="402" width="184" height="28" rx="14"/>
                        <g class="caption"><text x="924" y="398">Wartehalle</text><text x="938" y="424">Gebäudeteil IV</text></g>
                    </g>

                    <!-- Gebäudeteil VII -->
                    <g transform="translate(1860 810)">
                        <path class="wall w14" d="M518 766H678M524 766L519 1008H750V828H860M852 828V908H765M672 766V790M672 812V828H700"/>
                        <path class="wall w8" d="M587 772V857H628M640 830V895M530 897H660M592 900V1000M652 935V1000M655 933H745M690 830V930M640 830H690M618 780V850M590 825H640M655 900V933"/>
                        <path class="wall w4" d="M718 850V925M600 780V810H640M628 835V860M645 785V815"/>
                        <path class="glass" d="M550 766h22M600 766h24M540 1008h25M690 1008h25M672 790v18M545 897h30M768 906h20M806 906h26M770 828h25"/>
                        <path class="fine" d="M745 935l-20 10v15l18-12M660 905l18 12M630 860l-12 10M585 850h40"/>
                        <rect class="pill" x="500" y="1053" width="188" height="29" rx="14"/>
                        <g class="caption"><text x="500" y="1050">Wohnhaus</text><text x="515" y="1076">Gebäudeteil VII</text></g>
                    </g>

                    <!-- Gebäudeteil VI -->
                    <g transform="translate(2880 1200)">
                        <path class="block" d="M120 268h155v25H148v135h50v24h-75V350h-3zM252 293h22v12h-22zM252 330h22v58h-22zM252 405h22v22h-22zM225 427h52v24h-52zM275 365h55v15h-55zM298 436h32v15h-32zM510 162h26v26h-26zM533 110h22v30h-22zM328 111h13v12h-13zM396 111h12v12h-12zM463 111h13v12h-13zM640 165l32 8-4 10-32-5z"/>
                        <path class="wall w8" d="M170 65V240M165 118H225V150H175M265 115V268M540 140V190H600M535 138H600M640 70V130M645 102H728V135M275 343H378M375 370V447H298M320 380V436M268 450V540M312 450V540M368 450L360 528"/>
                        <path class="wall w10" d="M170 450V525H205M225 525L265 545H312L360 530H475L430 415M40 225H165V235M0 350H165"/>
                        <path class="wall w12" d="M600 165L440 378M718 145L712 190Q700 230 655 285L520 475 470 520"/>
                        <path class="glass" d="M595 172l-25 33M545 238l-25 34M510 287l-25 34M475 333l-25 34M716 155l-3 30M700 220l-25 35M655 285l-22 30M620 335l-22 30M590 375l-22 32M560 420l-22 30M520 475l-30 28M190 523h22M420 530h20M335 535h20M240 530l20 12"/>
                        <path class="wall w12" stroke-dasharray="36 20" d="M275 193H515"/>
                        <path class="wall w8" d="M618 198l55 38M565 275l62 48M513 350l62 48M462 425l58 50M655 178l50 15"/>
                        <path class="wall w14" d="M608 228l-22 28M555 302l-22 30M500 378l-18 24"/>
                        <path class="ink" d="M672 188l24 14 6-12-24-14zM635 258l28 16-15 18-24-18M582 335l26 16-14 16-26-18M532 405l22 14-14 20-22-16M470 480l15 12-10 14-12-10M465 230L685 382M655 70V90M745 95q5 10 5 0M700 150a6 6 0 1 0 1 0M703 168a5 5 0 1 0 1 0M195 65V40"/>
                        <path class="fine" d="M275 188H515M275 198H515M250 485l15-5v20zM320 490l12-12v20zM300 425q5-20 20-15M335 460q10 15 15-10M465 425q15-12 20 0v30M585 258q10 30-5 25M530 335q5 40-10 40M575 145l20 15M625 110v15M205 85q0 15 15 20M380 403h25M70 290h-40v22M177 100l10 8 10-8"/>
                        <circle class="ring" cx="422" cy="398" r="18"/>
                        <path class="stairs" d="M357 375h15M357 383h15M357 391h15M357 399h15M357 407h15M357 415h15M357 350v70M372 350v70"/>
                        <path class="teal" d="M645 78h80v22h-80zM655 78v22M665 78v22M675 78v22M685 78v22M695 78v22"/>
                        <path class="yellow" d="M655 150h35M510 205h45M635 195h20M378 365v60M400 425h25M280 400v30"/>
                        <rect class="pill" x="340" y="257" width="47" height="27" rx="13"/>
                        <path class="ink" d="M197 238V770M397 280V770"/>
                        <g class="caption"><text x="630" y="450">Gebäudeteil VI</text><text x="202" y="595">Wannenbäder und Turm</text><text x="350" y="277">VI</text></g>
                    </g>
                    <g id="axes"></g>
                </svg>
            </div>
            <footer class="toolbar bottom" data-tools="select* rect poly | inherit go* tdown | layer-ok* layer-del"></footer>
        </section>

        <!-- Topic tree -->
        <section class="panel">
            <header class="tabs">
                <button class="tab active"><svg class="icon"><use href="#i-tag-green"/></svg>Themenhierarchie</button>
                <div class="toolbar tabs-fill" data-tools="max"></div>
            </header>
            <div class="toolbar" data-tools="back-off fwd up mouse | refresh | plus v node w child | pencil v copy v rename v | collapse v more"></div>
            <div class="view">
                <div class="tree-column">
                    <ul class="tree" id="topicTree"></ul>
                    <div class="scroll-h"><i></i></div>
                </div>
                <div class="scroll scroll-topic"><i></i></div>
            </div>
            <footer class="toolbar bottom" data-tools="allcheck* check | inherit go tdown* | union* intersect | star v filter v"></footer>
        </section>

        <!-- Document types -->
        <section class="panel">
            <header class="tabs">
                <button class="tab active"><svg class="icon"><use href="#i-tag-green"/></svg>Dokumenttypen</button>
                <button class="tab"><svg class="icon"><use href="#i-tag-blue"/></svg>Strukturtypen</button>
                <div class="toolbar tabs-fill" data-tools="max"></div>
            </header>
            <div class="toolbar" data-tools="mouse-off refresh | plus v node w child | pencil v copy v rename v | collapse v more"></div>
            <div class="view">
                <ul class="tree" id="documentTree"></ul>
            </div>
            <footer class="toolbar bottom" data-tools="allcheck* check | inherit* go tdown | union* intersect | star v filter v"></footer>
        </section>

        <!-- Result table -->
        <section class="panel">
            <header class="tabs">
                <button class="tab"><svg class="icon"><use href="#i-page"/></svg>Dokumente</button>
                <button class="tab"><svg class="icon"><use href="#i-weblink"/></svg>Weblinks</button>
                <button class="tab"><svg class="icon"><use href="#i-folder"/></svg>Kollektionen</button>
                <button class="tab active"><svg class="icon"><use href="#i-cube"/></svg>Strukturelemente</button>
                <div class="toolbar tabs-fill" data-tools="refresh | magnify | pencil v copy v rename v | cube tag-green | pdf v more max"></div>
            </header>
            <div class="view results">
                <div class="table-clip">
                    <table>
                        <thead>
                            <tr><th class="num"></th><th>Bezeichnung</th><th>Abkürzung</th><th>Zugeordnete Strukturtypen</th></tr>
                        </thead>
                        <tbody>
                            <tr><td>1</td><td>II.EG.001.T01.a</td><td></td><td>Innentür</td></tr>
                            <tr><td>2</td><td>II.EG.001.T03.b</td><td></td><td>Innentür</td></tr>
                            <tr><td>3</td><td>II.EG.001.T04.b</td><td>II.EG.001.T04.b</td><td>Innentür</td></tr>
                            <tr><td>4</td><td>II.EG.001.T06.c</td><td></td><td>Innentür</td></tr>
                            <tr><td>5</td><td>II.EG.001.T07.c</td><td></td><td>Innentür</td></tr>
                            <tr><td>6</td><td>II.EG.001.T08.c</td><td>II.EG.001.T08.c</td><td>Innentür</td></tr>
                            <tr><td>7</td><td>II.EG.001.T09.d</td><td>II.EG.001.T09.d</td><td>Innentür</td></tr>
                            <tr class="selected"><td>8</td><td>II.OG1.001.T01.b</td><td>II.OG1.001.T01.b</td><td>Innentür</td></tr>
                            <tr><td>9</td><td>II.OG1.001.T02.b</td><td>II.OG1.001.T02.b</td><td>Innentür</td></tr>
                            <tr><td>10</td><td>II.OG1.001.T05.c</td><td></td><td>Innentür</td></tr>
                            <tr><td>11</td><td>II.OG1.002.T01.a</td><td>II.OG1.002.T01.a</td><td>Innentür</td></tr>
                            <tr><td>12</td><td>II.OG1.002.T01.d</td><td></td><td>Innentür</td></tr>
                        </tbody>
                    </table>
                </div>
                <div class="scroll scroll-table"><i></i></div>
            </div>
            <footer class="table-footer">
                <span>30 Ergebnisse</span>
                <nav class="pager"><a href="#">Zurück</a><span>1</span><a href="#" class="next">Weiter</a></nav>
                <div class="toolbar bottom" data-tools="go* inherit | links* unlink | table* thumbs list"></div>
            </footer>
        </section>

        <!-- Summary -->
        <section class="panel">
            <header class="tabs">
                <button class="tab active focused"><svg class="icon"><use href="#i-summary"/></svg>Zusammenfassung</button>
                <button class="tab"><svg class="icon"><use href="#i-preview"/></svg>Dokumentvorschau</button>
                <div class="toolbar tabs-fill" data-tools="max"></div>
            </header>
            <div class="view results">
                <div class="summary">
                    <h2>Thematische Auszeichnungen:</h2>
                    <ul>
                        <li>Eigenschaften für Fenster u. Türen
                            <ul>
                                <li>Beschläge Türen
                                    <ul><li>Drücker</li><li>Fabrikat FSB 1293</li><li>Knauf</li></ul>
                                </li>
                                <li>Schloss
                                    <ul><li>Profilzylinderschloss</li></ul>
                                </li>
                                <li>Türanschlag DIN
                                    <ul><li>rechts</li></ul>
                                </li>
                                <li>Türblatt
                                    <ul><li>HPL</li><li>Türblattfarbe Kieselgrau 0742 (Fundermax)</li></ul>
                                </li>
                                <li>Zarge
                                    <ul><li>Aluminiumzarge</li><li>Eckzarge</li><li>Zargenfarbe RAL9002</li></ul>
                                </li>
                            </ul>
                        </li>
                        <li>Typ</li>
                    </ul>
                </div>
                <div class="scroll scroll-summary"><i></i></div>
            </div>
        </section>
    </main>

    <footer class="statusbar">
        <div class="status-left">
            <span class="grip"></span>
            <button class="tool on" aria-label="Fenster"><svg class="icon"><use href="#i-window"/></svg></button>
            <button class="tool"><span class="letter s">S</span></button>
            <button class="tool"><span class="letter e">E</span></button>
            <button class="tool"><span class="letter k">K</span></button>
            <button class="tool"><span class="letter p">P</span></button>
            <button class="tool"><span class="letter v">V</span></button>
            <span class="grip"></span>
            <div class="toolbar" data-tools="mouse refresh cascade blank"></div>
        </div>
        <div class="heap"><span class="heap-bar">594M of 912M</span><button class="heap-gc" aria-label="Speicher freigeben"><svg class="icon"><use href="#i-trash"/></svg></button></div>
        <div class="status-right">
            <span class="grip"></span>
            <div class="toolbar" data-tools="binoc wand | info gear"></div>
        </div>
    </footer>

    <script src="script.js"></script>
</body>
</html>
```
FILE: styles.css
```
:root {
    --bg: #464646;
    --view: #3b3b3b;
    --track: #171717;
    --line: #a3a3a3;
    --text: #f2f2f2;
    --accent: #0087e6;
    --on: #cce8ff;
    --on-border: #99d1ff;
}

* {
    box-sizing: border-box;
    margin: 0;
    padding: 0;
}

body {
    height: 100vh;
    display: flex;
    flex-direction: column;
    overflow: hidden;
    background: #3f3f3f;
    color: var(--text);
    font: 12px/18px Roboto, "Open Sans", sans-serif;
}

button {
    border: 0;
    background: none;
    color: inherit;
    font: inherit;
}

ul {
    list-style: none;
}

.sprite {
    position: absolute;
    width: 0;
    height: 0;
}

.icon {
    width: 16px;
    height: 16px;
    flex: none;
    display: block;
}

.workbench {
    flex: 1;
    min-height: 0;
    display: grid;
    grid-template-columns: minmax(0, 427fr) minmax(0, 1057fr) minmax(0, 428fr);
    grid-template-rows: minmax(0, 683fr) minmax(0, 299fr);
    gap: 4px;
}

.panel {
    min-width: 0;
    min-height: 0;
    display: flex;
    flex-direction: column;
    background: var(--bg);
    border: 1px solid var(--line);
    border-radius: 4px 4px 0 0;
}

/* Tabs */
.tabs {
    display: flex;
    flex: none;
    height: 23px;
}

.tab {
    display: flex;
    align-items: center;
    gap: 5px;
    padding: 0 3px;
    white-space: nowrap;
    border-right: 1px solid var(--line);
    border-bottom: 1px solid var(--line);
}

.tab.active {
    border-bottom-color: transparent;
}

.tab.focused {
    box-shadow: inset 0 2px 0 #0078d4;
}

.tabs-fill {
    flex: 1;
    border-bottom: 1px solid var(--line);
}

/* Toolbars */
.toolbar {
    display: flex;
    align-items: center;
    justify-content: flex-end;
    flex-shrink: 0;
    min-height: 24px;
    padding-right: 3px;
}

.tabs .toolbar {
    min-height: 0;
}

.tool {
    width: 23px;
    height: 22px;
    display: flex;
    align-items: center;
    justify-content: center;
    border: 1px solid transparent;
    border-radius: 2px;
}

.tool.on {
    background: var(--on);
    border-color: var(--on-border);
}

.drop {
    width: 14px;
    height: 22px;
    display: flex;
    align-items: center;
    justify-content: center;
}

.drop::after {
    content: "";
    border: 3px solid transparent;
    border-top: 4px solid #222;
    border-bottom: 0;
}

.drop.light::after {
    border-top-color: #858585;
}

.sep {
    width: 10px;
    height: 18px;
    display: flex;
    justify-content: center;
}

.sep::after {
    content: "";
    width: 2px;
    background: #7c7c7c;
    border-left: 1px solid #262626;
}

.bottom .sep {
    height: 12px;
}

.bottom .sep::after {
    width: 1px;
    background: #e8e8e8;
    border: 0;
}

/* Trees */
.view {
    flex: 1;
    min-height: 0;
    display: flex;
    margin: 0 2px;
    background: var(--view);
}

.tree,
.tree-column {
    flex: 1;
    min-width: 0;
    min-height: 0;
    overflow: hidden;
}

.tree-column {
    display: flex;
    flex-direction: column;
}

.tree li {
    display: flex;
    align-items: center;
    height: 18px;
    padding-left: calc(3px + var(--level) * 16px);
    white-space: nowrap;
}

.tree label {
    display: flex;
    align-items: center;
    gap: 6px;
    margin-left: 4px;
}

.tree .icon {
    width: 15px;
    height: 15px;
}

.tree input {
    appearance: none;
    width: 12px;
    height: 12px;
    flex: none;
    display: grid;
    place-items: center;
    background: #f3f3f3;
    border-radius: 3px;
}

.tree input:checked {
    background: #005fb8;
}

.tree input:checked::after {
    content: "";
    width: 6px;
    height: 3px;
    border: solid #fff;
    border-width: 0 0 1px 1px;
    transform: rotate(-45deg);
}

.twisty {
    width: 12px;
    height: 18px;
    margin-right: 6px;
    display: grid;
    place-items: center;
    flex: none;
}

.twisty.closed::after,
.twisty.open::after {
    content: "";
    width: 7px;
    height: 7px;
    border: solid #c4c4c4;
    border-width: 0 2px 2px 0;
    transform: rotate(-45deg);
}

.twisty.open::after {
    border-color: #f2f2f2;
    transform: rotate(45deg);
}

/* Scrollbars */
.scroll {
    width: 17px;
    flex: none;
    display: grid;
    justify-content: center;
    background: var(--track);
}

.scroll i {
    grid-row: 2;
    width: 2px;
    background: #a0a0a0;
}

.scroll-structure {
    grid-template-rows: 5fr 74fr 21fr;
}

.scroll-topic {
    grid-template-rows: 9fr 38fr 53fr;
}

.scroll-table {
    grid-template-rows: 7fr 33fr 60fr;
}

.scroll-summary {
    grid-template-rows: 40fr 37fr 23fr;
}

.scroll-h {
    height: 17px;
    flex: none;
    display: grid;
    grid-template-columns: 4fr 77fr 19fr;
    align-items: center;
    background: var(--track);
}

.scroll-h i {
    grid-column: 2;
    height: 2px;
    background: #a0a0a0;
}

/* Floor plan */
.canvas {
    flex: 1;
    min-height: 0;
    display: flex;
    margin: 2px 2px 0;
    background: #fff;
}

.plan {
    width: 100%;
    height: 100%;
    fill: none;
}

.wall { stroke: #a6a6a6; }
.dark { stroke: #8c8c8c; }
.w4 { stroke-width: 4; }
.w6 { stroke-width: 6; }
.w8 { stroke-width: 8; }
.w10 { stroke-width: 10; }
.w12 { stroke-width: 12; }
.w14 { stroke-width: 14; }
.glass { stroke: #eef2f1; stroke-width: 8; }
.block { fill: #a3a3a3; }
.fine { stroke: #aaa; stroke-width: 2; }
.ink { stroke: #333; stroke-width: 2; stroke-opacity: .6; }
.stairs { stroke: #777; stroke-width: 2; }
.teal { stroke: #b4c8c0; stroke-width: 2; }
.yellow { stroke: #f3eb9a; stroke-width: 4; }
.pinkline { stroke: #e3b4b4; stroke-width: 2; }
.marked { fill: #7dff7d; }
.pill { stroke: #888; stroke-width: 2; }
.ring { stroke: #a3a3a3; stroke-width: 7; fill: #fff; }
.bubble { stroke: #999; stroke-width: 2; fill: #fff; }
.bubble-text { stroke: #888; stroke-width: 3; stroke-dasharray: 4 2; }

.caption {
    fill: #111;
    font: 14px "Liberation Sans", Arial, sans-serif;
}

/* Result table */
.results {
    margin-top: 2px;
}

.table-clip {
    flex: 1;
    min-width: 0;
    overflow: hidden;
}

table {
    width: 100%;
    table-layout: fixed;
    border-collapse: collapse;
}

th,
td {
    height: 20px;
    line-height: 18px;
    text-align: center;
    border: 1px solid #c4c4c4;
    border-width: 0 1px 1px 0;
}

th {
    background: #999;
    font: 14px/18px "DejaVu Sans Condensed", "DejaVu Sans", sans-serif;
}

th.num {
    width: 40px;
    background: var(--view);
}

.selected td {
    background: var(--accent);
    border-bottom: 1px dotted #111;
}

.selected td + td {
    font: 13px/18px "DejaVu Sans Condensed", "DejaVu Sans", sans-serif;
}

.table-footer {
    display: grid;
    grid-template-columns: 1fr auto 1fr;
    align-items: center;
    height: 26px;
    flex: none;
    padding-left: 2px;
}

.pager {
    display: flex;
    gap: 6px;
    color: #757575;
}

.pager a {
    color: inherit;
}

.pager .next {
    margin-left: 30px;
}

/* Summary */
.summary {
    flex: 1;
    min-width: 0;
    overflow: hidden;
    padding: 7px 0 0 6px;
    line-height: 15px;
}

.summary h2 {
    font-size: 12px;
    line-height: 15px;
}

.summary li {
    padding-left: 8px;
}

.summary li::before {
    content: "•";
    display: inline-block;
    width: 8px;
    margin-left: -8px;
}

.summary li ul {
    padding-left: 13px;
}

/* Status bar */
.statusbar {
    display: flex;
    flex: none;
    height: 24px;
    background: var(--bg);
}

.statusbar .toolbar {
    min-height: 0;
}

.status-left,
.status-right {
    display: flex;
    align-items: center;
}

.status-left {
    flex: 1387;
}

.status-right {
    flex: 386;
    justify-content: flex-end;
}

.grip {
    width: 2px;
    height: 14px;
    margin: 0 2px 0 1px;
    background: repeating-linear-gradient(#d8d8d8 0 2px, transparent 2px 4px);
}

.letter {
    width: 16px;
    height: 12px;
    font: 13px/10px "Liberation Sans", Arial, sans-serif;
    color: #222;
    background: #f0f0f0;
    border-top: 2px solid #777;
}

.letter.s { border: 1px solid #1c6b32; border-top-width: 2px; }
.letter.e { border: 1px solid #e8a51d; border-top-width: 2px; }
.letter.k { border: 1px solid #8c1218; border-top-width: 2px; }
.letter.p { border: 1px solid #000; border-top-width: 2px; }

.heap {
    display: flex;
    width: 148px;
    height: 22px;
    border: 1px solid #eee;
    border-width: 0 1px 1px 0;
}

.heap-bar {
    flex: 1;
    padding-left: 8px;
    text-align: center;
    line-height: 22px;
    color: #f4f4f4;
    background: linear-gradient(90deg, #a0a0a0 65%, #f0f0f0 65%);
}

.heap-gc {
    width: 18px;
    display: grid;
    place-items: center;
}
```
FILE: script.js
```
// Toolbars: "*" marks a pressed button, "|" a separator, "v" and "w" a drop-down arrow
document.querySelectorAll('[data-tools]').forEach(bar => {
    bar.innerHTML = bar.dataset.tools.split(' ').map(token => {
        if (token === '|') return '<span class="sep"></span>';
        if (token === 'v') return '<button class="drop" aria-label="Menü"></button>';
        if (token === 'w') return '<button class="drop light" aria-label="Menü"></button>';
        const name = token.replace('*', '');
        const on = token.endsWith('*') ? ' on' : '';
        return `<button class="tool${on}" aria-label="${name}"><svg class="icon"><use href="#i-${name}"/></svg></button>`;
    }).join('');
});

// Trees: level, state (">" closed, "v" open, "-" leaf), text, checked
const structure = [
    [0, 'v', 'Nürnberg'],
    [1, 'v', 'Städtisches Volksbad'],
    [2, '>', 'GT I (Schwimmhalle I)'],
    [2, 'v', 'GT II (Schwimmhalle II)', true],
    [3, '>', '1. Obergeschoss'],
    [3, '>', '1. Untergeschoss'],
    [3, 'v', '2. Obergeschoss'],
    [4, '-', 'II.OG2.001'],
    [4, '-', 'II.OG2.002'],
    [4, 'v', 'II.OG2.003'],
    [5, '-', 'Wand d'],
    [4, 'v', 'II.OG2.004'],
    [5, '>', 'Wand c'],
    [4, '-', 'II.OG2.005'],
    [4, 'v', 'Raum 001'],
    [5, '-', 'Decke D'],
    [5, '-', 'Fußboden FB'],
    [5, '-', 'Treppe TR'],
    [5, '-', 'Wand a'],
    [5, '-', 'Wand b'],
    [5, '-', 'Wand c'],
    [5, '>', 'Wand d'],
    [4, '>', 'Raum 002'],
    [4, '>', 'Raum 003'],
    [4, '>', 'Raum 004'],
    [3, '>', '2. OG Zwischengeschoss'],
    [3, '>', '3. Obergeschoss'],
    [3, '>', '4. Obergeschoss'],
    [3, '>', 'Erdgeschoss'],
    [2, '>', 'GT III (Schwimmhalle III)'],
    [2, '>', 'GT IV (Eingangshalle - Haupthalle)'],
    [2, '>', 'GT IV (Eingangshalle - Verbindungstrakt)'],
    [2, '>', 'GT IV (Eingangshalle - Vorhalle Portikus)'],
    [2, '>', 'GT V (Sauna, Wäscherei)']
];

const topics = [[1, 'v', 'Beschläge Türen', true]].concat([
    'Automatiktürsystem mit Kombimelder GC365', 'Automatiktürsystem mit Sensor',
    'Automatiktürsystem mit Taster', 'Automatische Schiebetür mit Fluchttürsicherung',
    'Drehbeschlag 160kg', 'Drücker', 'Drücker', 'Drücker Feuerschutz',
    'Drücker mit Fluchttürsicherung', 'Drücker Rahmentürdrücker FSB061286',
    'elektrischer Türöffner', 'Fabrikat Alembro 0500.B1', 'Fabrikat FSB 1293',
    'Fabrikat Tummescheit (Messing)', 'Falz-Treibriegel bei Stehflügel', 'Fenstergriff',
    'Freilauftürschließermit Komfortrastfeststellung',
    'Gleitschienentürschließer mit elekt. Feststellanlage u. Rauch',
    'Gleitschienentürschließer mit elekt. Freilauffunktion', 'Griffstange', 'Griffstange',
    'keine Beschläge', 'Knauf', 'Knauf', 'Muschel', 'Muschel', 'Obentürschließer',
    'Obertürschließer Feststellfunktion', 'Obertürschließer Rauchmelder',
    'Obertürschließer Schließfolgeregelung', 'Rahmentürdrücker FSB061286', 'Riegel'
].map(text => [2, '-', text]));

const documents = [
    [0, '-', 'Audiodokumente'],
    [0, '-', 'Filmdokumente'],
    [0, '>', 'Fotodokumente'],
    [0, '>', 'Kartierungen'],
    [0, '>', 'Plandokumente und Zeichnungen'],
    [0, '>', 'Schriftliche Dokumente']
];

function fillTree(id, icon, rows) {
    const states = { '>': 'closed', 'v': 'open', '-': '' };
    document.getElementById(id).innerHTML = rows.map(([level, state, text, checked], i) => `
        <li style="--level:${level}">
            <span class="twisty ${states[state]}"></span>
            <input type="checkbox" id="${id}-${i}"${checked ? ' checked' : ''}>
            <label for="${id}-${i}"><svg class="icon"><use href="#i-${icon}"/></svg>${text}</label>
        </li>`).join('');
}

fillTree('structureTree', 'cube', structure);
fillTree('topicTree', 'tag-green', topics);
fillTree('documentTree', 'tag-red', documents);

// Building axes with their bubbles
let axes = '';

function line(x1, y1, x2, y2) {
    axes += `<path class="ink" d="M${x1} ${y1}L${x2} ${y2}"/>`;
}

function bubble(x, y) {
    axes += `<rect class="bubble" x="${x - 13}" y="${y - 7}" width="26" height="14" rx="6"/>`;
    axes += `<path class="bubble-text" d="M${x - 5} ${y}h10"/>`;
}

[55, 130, 175, 240, 353, 418, 520, 585, 700, 763, 857, 958].forEach(x => {
    line(2880 + x, 362, 2880 + x, 910);
    bubble(2880 + x, 355);
});
line(2935, 391, 3838, 391);

[208, 268, 310, 378, 412, 442, 510, 552, 612].forEach(y => {
    line(2935, 300 + y, 3995, 300 + y);
    bubble(4012, 300 + y);
});
[622, 680, 718, 814, 912, 962].forEach(y => bubble(4042, 300 + y));
line(3940, 508, 3940, 1262);

[180, 268, 343, 420, 481, 502, 560, 640, 715, 793, 877].forEach(x => {
    line(2880 + x, 910, 2880 + x, 1445);
    bubble(2880 + x, 1452);
});
line(3145, 1420, 3757, 1420);

[66, 126, 168, 235, 271, 303, 373, 415, 475].forEach(y => {
    line(1920, 810 + y, 2710, 810 + y);
    bubble(1902, 810 + y);
});
line(1937, 870, 1937, 1290);

[290, 371, 431, 500, 574, 641, 700, 778].forEach(x => {
    line(1860 + x, 845, 1860 + x, 1335);
    bubble(1860 + x, 1344);
});
line(2150, 1308, 2640, 1308);

[860, 932, 1025, 1113, 1186].forEach(x => {
    line(1860 + x, 940, 1860 + x, 1845);
    bubble(1860 + x, 1864);
});
line(2720, 1845, 3046, 1845);
line(2885, 1845, 2885, 1970);
line(2576, 1560, 2576, 1915);

[553, 607, 666, 738].forEach(y => {
    line(2550, 810 + y, 3046, 810 + y);
    bubble(2528, 810 + y);
});

[[617, 324], [542, 405], [461, 493], [376, 587], [397, 676], [350, 631], [350, 690], [350, 748], [350, 802], [452, 726]]
    .forEach(([x, y]) => bubble(1860 + x, 60 + y));
[[380, 631, 710, 631], [360, 688, 1070, 688], [360, 748, 1060, 748]]
    .forEach(([a, b, c, d]) => line(1860 + a, 60 + b, 1860 + c, 60 + d));

document.getElementById('axes').innerHTML = axes;
```
